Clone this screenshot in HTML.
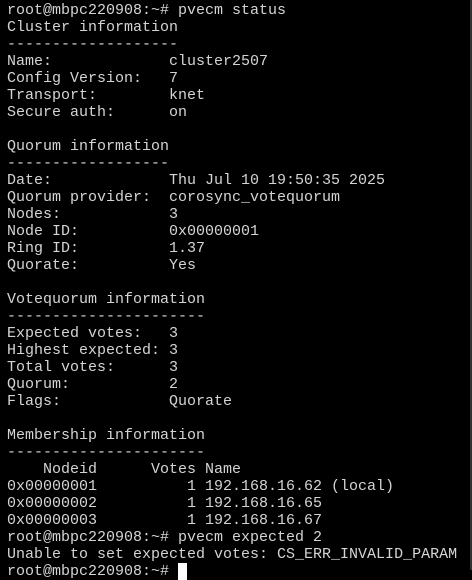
<!DOCTYPE html>
<html><head><style>
html,body{margin:0;padding:0;background:#000;width:472px;height:570px;overflow:hidden}
pre{margin:0;position:absolute;left:7px;top:2px;font-family:"Liberation Mono",monospace;font-size:15px;line-height:17px;color:#d4d4d4;white-space:pre}
.cur{background:#fff;color:#000}
.edge{position:absolute;right:0;top:0;width:2px;height:570px;background:#333}
</style></head><body>
<pre>root@mbpc220908:~# pvecm status
Cluster information
-------------------
Name:             cluster2507
Config Version:   7
Transport:        knet
Secure auth:      on

Quorum information
------------------
Date:             Thu Jul 10 19:50:35 2025
Quorum provider:  corosync_votequorum
Nodes:            3
Node ID:          0x00000001
Ring ID:          1.37
Quorate:          Yes

Votequorum information
----------------------
Expected votes:   3
Highest expected: 3
Total votes:      3
Quorum:           2
Flags:            Quorate

Membership information
----------------------
    Nodeid      Votes Name
0x00000001          1 192.168.16.62 (local)
0x00000002          1 192.168.16.65
0x00000003          1 192.168.16.67
root@mbpc220908:~# pvecm expected 2
Unable to set expected votes: CS_ERR_INVALID_PARAM
root@mbpc220908:~# <span class="cur"> </span></pre>
<div class="edge"></div>
</body></html>
